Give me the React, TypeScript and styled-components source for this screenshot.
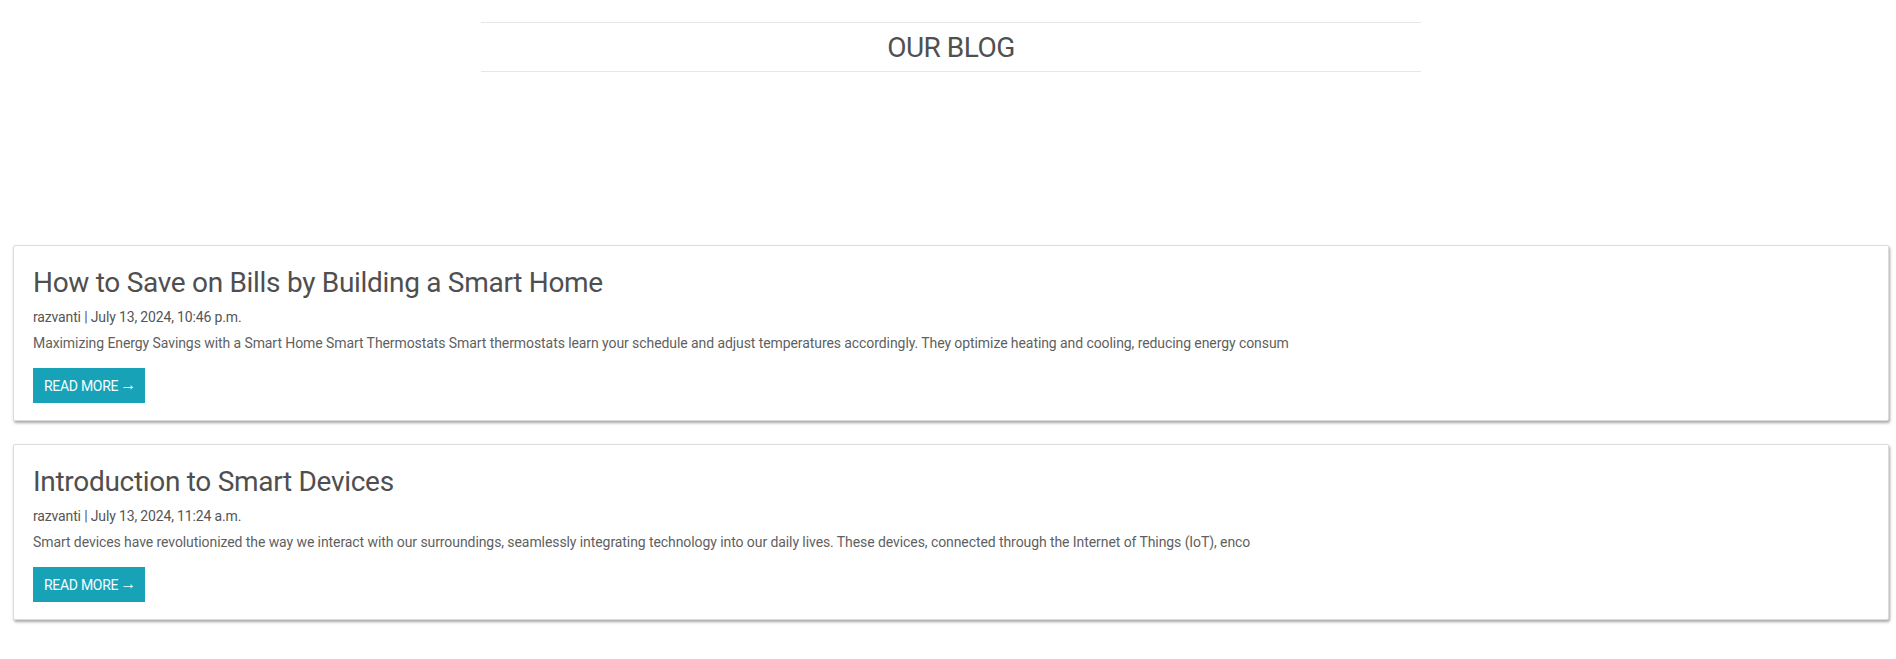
import React from "react";
import styled, { createGlobalStyle } from "styled-components";

const GlobalStyle = createGlobalStyle`
  html, body { margin: 0; padding: 0; background: #ffffff; }
  body { font-family: Roboto, "Liberation Sans", Arial, sans-serif; color: #555; }
  * { box-sizing: border-box; }
`;

const Page = styled.main`
  display: flex;
  flex-direction: column;
  padding: 22px 7px 20px 13px;
`;

const HeaderBar = styled.header`
  width: 940px;
  align-self: center;
  border-top: 1px solid #e6e6e6;
  border-bottom: 1px solid #e6e6e6;
  padding: 8px 0 6px;
  text-align: center;
`;

const Heading = styled.h1`
  margin: 0;
  font-family: Roboto, "Liberation Sans", sans-serif;
  font-size: 28px;
  line-height: 34px;
  font-weight: 400;
  letter-spacing: -0.5px;
  color: #505050;
`;

const PostList = styled.section`
  display: flex;
  flex-direction: column;
  gap: 23px;
  margin-top: 173px;
`;

const Card = styled.article`
  background: #fff;
  border: 1px solid #dcdcdc;
  border-radius: 2px;
  box-shadow: 1px 2px 3px rgba(0, 0, 0, 0.35);
  padding: 20px 19px 17px;
  display: flex;
  flex-direction: column;
  align-items: flex-start;
`;

const Title = styled.h2`
  margin: 0 0 7px;
  font-size: 28px;
  line-height: 34px;
  font-weight: 400;
  letter-spacing: -0.3px;
  color: #4f4f4f;
`;

const Meta = styled.div`
  font-size: 14px;
  line-height: 20px;
  letter-spacing: -0.15px;
  color: #555;
  margin-bottom: 6px;
`;

const Excerpt = styled.p`
  margin: 0 0 15px;
  font-size: 14px;
  line-height: 20px;
  letter-spacing: -0.08px;
  color: #5f5f5f;
  white-space: nowrap;
`;

const ReadMore = styled.a`
  display: inline-flex;
  align-items: center;
  gap: 2px;
  height: 35px;
  padding: 0 9px 0 11px;
  background: #17a2b8;
  color: #f4fdff;
  font-size: 14px;
  letter-spacing: -0.3px;
  text-transform: uppercase;
  text-decoration: none;
  cursor: pointer;
`;

const Arrow = styled.span`
  font-size: 16px;
  line-height: 1;
  margin-top: -1px;
`;

type Post = { title: string; author: string; date: string; excerpt: string };

const posts: Post[] = [
  {
    title: "How to Save on Bills by Building a Smart Home",
    author: "razvanti",
    date: "July 13, 2024, 10:46 p.m.",
    excerpt:
      "Maximizing Energy Savings with a Smart Home Smart Thermostats Smart thermostats learn your schedule and adjust temperatures accordingly. They optimize heating and cooling, reducing energy consum",
  },
  {
    title: "Introduction to Smart Devices",
    author: "razvanti",
    date: "July 13, 2024, 11:24 a.m.",
    excerpt:
      "Smart devices have revolutionized the way we interact with our surroundings, seamlessly integrating technology into our daily lives. These devices, connected through the Internet of Things (IoT), enco",
  },
];

export default function App() {
  return (
    <>
      <GlobalStyle />
      <Page>
        <HeaderBar>
          <Heading>OUR BLOG</Heading>
        </HeaderBar>
        <PostList>
          {posts.map((p) => (
            <Card key={p.title}>
              <Title>{p.title}</Title>
              <Meta>
                {p.author} | {p.date}
              </Meta>
              <Excerpt>{p.excerpt}</Excerpt>
              <ReadMore href="#">
                Read More<Arrow>→</Arrow>
              </ReadMore>
            </Card>
          ))}
        </PostList>
      </Page>
    </>
  );
}
